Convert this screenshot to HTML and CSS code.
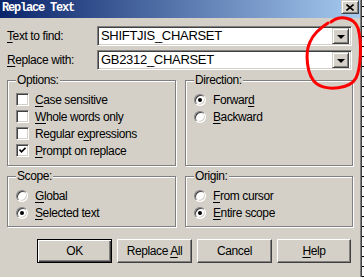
FILE: index.html
```html
<!DOCTYPE html>
<html lang="en">
<head>
    <meta charset="UTF-8">
    <title>Replace Text</title>
    <link rel="stylesheet" href="styles.css">
</head>
<body>
<div class="screen">
    <div class="window">
        <div class="titlebar">
            <span class="title">Replace Text</span>
            <span class="close-btn">
                <svg width="8" height="7" viewBox="0 0 8 7"><path d="M0.5 0.5 L7.5 6.5 M7.5 0.5 L0.5 6.5" stroke="#000" stroke-width="1.6"/></svg>
            </span>
        </div>

        <div class="dialog">
            <div class="field">
                <label><u>T</u>ext to find:</label>
                <div class="combo">
                    <span class="combo-text">SHIFTJIS_CHARSET</span>
                    <span class="drop-btn"><span class="arrow"></span></span>
                </div>
            </div>
            <div class="field">
                <label><u>R</u>eplace with:</label>
                <div class="combo">
                    <span class="combo-text">GB2312_CHARSET</span>
                    <span class="drop-btn"><span class="arrow"></span></span>
                </div>
            </div>

            <div class="groups">
                <div class="group">
                    <div class="group-title">Options:</div>
                    <div class="opts">
                        <div class="opt"><span class="check"></span><span><u>C</u>ase sensitive</span></div>
                        <div class="opt"><span class="check"></span><span><u>W</u>hole words only</span></div>
                        <div class="opt"><span class="check"></span><span>Regular e<u>x</u>pressions</span></div>
                        <div class="opt"><span class="check checked">
                            <svg width="7" height="7" viewBox="0 0 7 7"><path d="M0.5 2.5 L2.5 4.8 L6.5 0.8" fill="none" stroke="#000" stroke-width="1.6"/></svg>
                        </span><span><u>P</u>rompt on replace</span></div>
                    </div>
                </div>
                <div class="group group-right">
                    <div class="group-title">Direction:</div>
                    <div class="opts">
                        <div class="opt"><span class="radio on"></span><span>Forwar<u>d</u></span></div>
                        <div class="opt"><span class="radio"></span><span><u>B</u>ackward</span></div>
                    </div>
                </div>
                <div class="group">
                    <div class="group-title">Scope:</div>
                    <div class="opts">
                        <div class="opt"><span class="radio"></span><span><u>G</u>lobal</span></div>
                        <div class="opt"><span class="radio on"></span><span><u>S</u>elected text</span></div>
                    </div>
                </div>
                <div class="group group-right">
                    <div class="group-title">Origin:</div>
                    <div class="opts">
                        <div class="opt"><span class="radio"></span><span><u>F</u>rom cursor</span></div>
                        <div class="opt"><span class="radio on"></span><span><u>E</u>ntire scope</span></div>
                    </div>
                </div>
            </div>

            <div class="buttons">
                <span class="btn btn-default"><span>OK</span></span>
                <span class="btn"><span>Replace <u>A</u>ll</span></span>
                <span class="btn"><span>Cancel</span></span>
                <span class="btn btn-help"><span><u>H</u>elp</span></span>
            </div>
        </div>
    </div>
    <div class="ruler"></div>

    <svg class="scribble" width="364" height="277" viewBox="0 0 364 277">
        <path d="M331 22 C340 15, 354 17, 358 28 C362 42, 361 68, 356 78 C350 89, 328 91, 317 84 C306 76, 305 52, 310 42 C313 35, 320 28, 328 23"
              fill="none" stroke="#ff0000" stroke-width="3" stroke-linecap="round"/>
    </svg>
</div>
</body>
</html>
```

FILE: styles.css
```css
body {
    margin: 0;
    font-family: 'Liberation Sans', Arial, sans-serif;
    font-size: 12px;
    letter-spacing: -0.4px;
    color: #000;
    background: #fff;
}

u {
    text-decoration-thickness: 1px;
    text-underline-offset: 2px;
}

.screen {
    position: relative;
    display: flex;
    width: 364px;
    height: 277px;
    overflow: hidden;
}

.window {
    width: 360px;
    background: #d4d0c8;
    border-right: 1px solid #808080;
}

.ruler {
    flex: 1;
    border-left: 1px solid #404040;
    background: repeating-linear-gradient(to bottom, #fff 0 6px, #000 6px 7px, #fff 7px 10px);
}

/* title bar */
.titlebar {
    height: 18px;
    display: flex;
    justify-content: space-between;
    align-items: flex-start;
    background: linear-gradient(to right, #0a246a, #a6caf0);
}

.title {
    font-family: 'Liberation Mono', 'Courier New', monospace;
    font-weight: bold;
    font-size: 12px;
    letter-spacing: -1.2px;
    color: #fff;
    padding: 1px 0 0 2px;
    line-height: 14px;
}

.close-btn {
    width: 16px;
    height: 12px;
    margin-right: 1px;
    display: flex;
    align-items: center;
    justify-content: center;
    background: #d4d0c8;
    border: 1px solid;
    border-color: #d4d0c8 #404040 #404040 #d4d0c8;
    box-shadow: inset 1px 1px 0 #fff, inset -1px -1px 0 #808080;
}

/* dialog body */
.dialog {
    padding: 8px 0 0 7px;
}

.field {
    display: flex;
    align-items: center;
    height: 20px;
    margin-bottom: 4px;
}

.field label {
    width: 90px;
}

.combo {
    box-sizing: border-box;
    width: 255px;
    height: 20px;
    display: flex;
    padding: 1px 2px 1px 1px;
    background: #fff;
    border: 1px solid;
    border-color: #808080 #fff #fff #808080;
    box-shadow: inset 1px 1px 0 #404040, inset -1px -1px 0 #d4d0c8;
}

.combo-text {
    flex: 1;
    font-size: 13px;
    letter-spacing: -0.3px;
    line-height: 16px;
    padding-left: 2px;
}

.drop-btn {
    box-sizing: border-box;
    width: 17px;
    height: 16px;
    display: flex;
    align-items: center;
    justify-content: center;
    background: #d4d0c8;
    border: 1px solid;
    border-color: #d4d0c8 #404040 #404040 #d4d0c8;
    box-shadow: inset 1px 1px 0 #fff, inset -1px -1px 0 #808080;
}

.arrow {
    width: 0;
    height: 0;
    border-left: 4px solid transparent;
    border-right: 4px solid transparent;
    border-top: 4px solid #000;
    margin-top: 1px;
}

/* group boxes */
.groups {
    display: grid;
    grid-template-columns: 169px 168px;
    grid-template-rows: 86px 51px;
    column-gap: 9px;
    row-gap: 10px;
    margin-top: 10px;
}

.group {
    box-sizing: border-box;
    border: 1px solid #808080;
    box-shadow: inset 1px 1px 0 #fff, 1px 1px 0 #fff;
    padding: 0 0 0 8px;
}

.group-title {
    width: fit-content;
    margin-top: -8px;
    padding: 0 1px;
    line-height: 14px;
    background: #d4d0c8;
}

.opts {
    margin-top: 4px;
}

.opt {
    display: flex;
    align-items: center;
    height: 17px;
    gap: 6px;
}

.check {
    box-sizing: border-box;
    width: 13px;
    height: 13px;
    display: flex;
    align-items: center;
    justify-content: center;
    background: #fff;
    border: 1px solid;
    border-color: #808080 #fff #fff #808080;
    box-shadow: inset 1px 1px 0 #404040, inset -1px -1px 0 #d4d0c8;
}

.radio {
    box-sizing: border-box;
    width: 12px;
    height: 12px;
    margin-right: 1px;
    border-radius: 50%;
    background: #fff;
    border: 1px solid;
    border-color: #808080 #fff #fff #808080;
    box-shadow: inset 1px 1px 0 #404040, inset -1px -1px 0 #d4d0c8;
    display: flex;
    align-items: center;
    justify-content: center;
}

.radio.on::after {
    content: "";
    width: 4px;
    height: 4px;
    border-radius: 50%;
    background: #000;
}

/* buttons */
.buttons {
    display: flex;
    gap: 5px;
    margin-top: 12px;
    padding-left: 30px;
}

.btn {
    box-sizing: border-box;
    width: 75px;
    height: 24px;
    display: flex;
    align-items: center;
    justify-content: center;
    background: #d4d0c8;
    border: 1px solid;
    border-color: #fff #404040 #404040 #fff;
    box-shadow: inset -1px -1px 0 #808080;
}

.btn-default {
    border-color: #000;
    box-shadow: inset 1px 1px 0 #fff, inset -1px -1px 0 #404040, inset -2px -2px 0 #808080;
}

.btn-help {
    width: 74px;
}

.scribble {
    position: absolute;
    left: 0;
    top: 0;
    pointer-events: none;
}
```
